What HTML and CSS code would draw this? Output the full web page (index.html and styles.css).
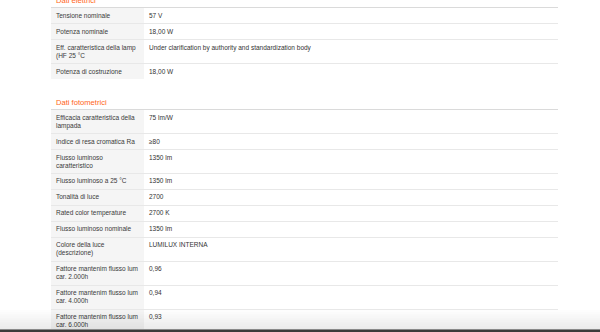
FILE: index.html
```html
<!DOCTYPE html>
<html lang="it">
<head>
<meta charset="utf-8">
<link rel="stylesheet" href="styles.css">
</head>
<body>
<main class="page">
  <section class="section">
    <h2 class="heading">Dati elettrici</h2>
    <table class="specs">
      <tr><th>Tensione nominale</th><td>57 V</td></tr>
      <tr><th>Potenza nominale</th><td>18,00 W</td></tr>
      <tr><th>Eff. caratteristica della lamp (HF 25 °C</th><td>Under clarification by authority and standardization body</td></tr>
      <tr><th>Potenza di costruzione</th><td>18,00 W</td></tr>
    </table>
  </section>
  <section class="section">
    <h2 class="heading">Dati fotometrici</h2>
    <table class="specs">
      <tr><th>Efficacia caratteristica della lampada</th><td>75 lm/W</td></tr>
      <tr><th>Indice di resa cromatica Ra</th><td>≥80</td></tr>
      <tr><th>Flusso luminoso caratteristico</th><td>1350 lm</td></tr>
      <tr><th>Flusso luminoso a 25 °C</th><td>1350 lm</td></tr>
      <tr><th>Tonalità di luce</th><td>2700</td></tr>
      <tr><th>Rated color temperature</th><td>2700 K</td></tr>
      <tr><th>Flusso luminoso nominale</th><td>1350 lm</td></tr>
      <tr><th>Colore della luce (descrizione)</th><td>LUMILUX INTERNA</td></tr>
      <tr><th>Fattore mantenim flusso lum car. 2.000h</th><td>0,96</td></tr>
      <tr><th>Fattore mantenim flusso lum car. 4.000h</th><td>0,94</td></tr>
      <tr><th>Fattore mantenim flusso lum car. 6.000h</th><td>0,93</td></tr>
    </table>
  </section>
</main>
<div class="bottom-shade"></div>
<div class="bottom-bar"></div>
</body>
</html>
```
FILE: styles.css
```css
html, body {
  margin: 0;
  padding: 0;
  background: #ffffff;
  overflow: hidden;
  height: 332px;
}

body {
  font-family: "Liberation Sans", Arial, sans-serif;
  color: #333333;
}

.page {
  width: 507px;
  margin: -4px 0 0 51px;
  display: flex;
  flex-direction: column;
  gap: 19px;
}

.heading {
  margin: 0 0 2px 5px;
  font-size: 7.6px;
  line-height: 9px;
  font-weight: normal;
  color: #ff6418;
}

.specs {
  width: 100%;
  table-layout: fixed;
  border-collapse: collapse;
  border-top: 1px solid #dadada;
  font-size: 6.5px;
  line-height: 8px;
}

.specs th,
.specs td {
  padding: 3.6px 5px 3.4px;
  text-align: left;
  vertical-align: top;
  font-weight: normal;
  border-bottom: 1px solid #e8e8e8;
}

.specs tr:last-child th,
.specs tr:last-child td {
  border-bottom: none;
}

.specs th {
  width: 83px;
  background: #f5f5f5;
  color: #3a3a3a;
}

.specs td {
  color: #333333;
}

.bottom-shade {
  position: fixed;
  left: 0;
  right: 0;
  bottom: 3px;
  height: 20px;
  background: linear-gradient(to bottom, rgba(0, 0, 0, 0), rgba(0, 0, 0, 0.08));
}

.bottom-bar {
  position: fixed;
  left: 0;
  right: 0;
  bottom: 0;
  height: 3px;
  background: #3b3b3b;
  border-top: 1px solid #8a8a8a;
  box-sizing: border-box;
}
```
